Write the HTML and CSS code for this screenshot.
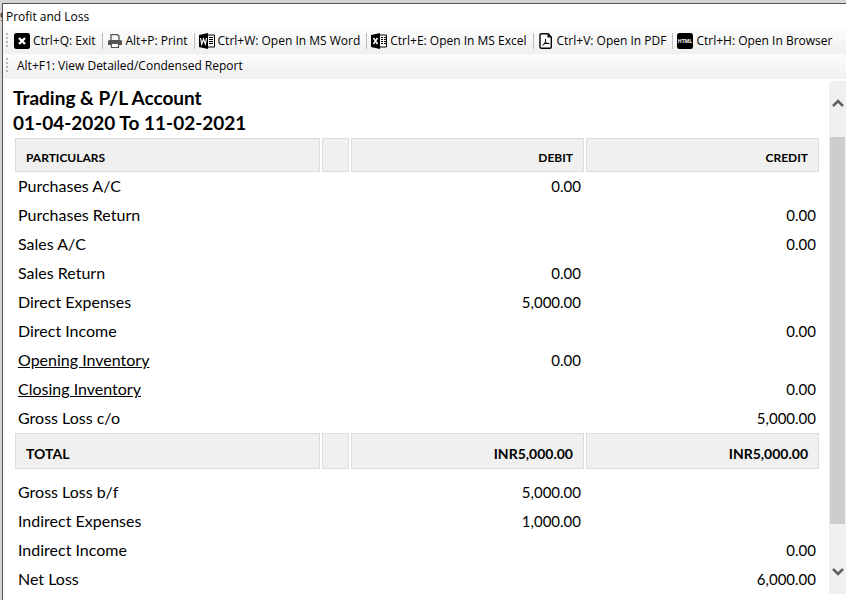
FILE: index.html
```html
<!DOCTYPE html>
<html lang="en">
<head>
  <meta charset="UTF-8" />
  <meta name="viewport" content="width=device-width, initial-scale=1" />
  <title>Profit and Loss</title>
  <link rel="stylesheet" href="styles.css">
</head>
<body>

  <div class="behind" aria-hidden="true">9</div>

  <div class="window">
    <div class="title-bar">Profit and Loss</div>

    <!-- Export / print buttons -->
    <div class="toolbar" role="toolbar">
      <span class="grip"></span>
      <button class="tool">
        <svg class="icon" viewBox="0 0 16 16"><rect width="16" height="16" rx="2.5"/><path d="M5 5l6 6M11 5l-6 6" stroke="#fff" stroke-width="2.4"/></svg>
        <span>Ctrl+Q: Exit</span>
      </button>
      <span class="separator"></span>
      <button class="tool">
        <svg class="icon" viewBox="0 0 16 16"><path d="M4 7V1.700h6.500L12 3.200V7" fill="none" stroke="#555" stroke-width="1.300"/><path d="M1 12V8.500Q1 7 2.500 7h11Q15 7 15 8.500V12h-3v-2H4v2z" fill="#555"/><path d="M4.500 10.500h7v4h-7z" fill="#fff" stroke="#555" stroke-width="1.200"/></svg>
        <span>Alt+P: Print</span>
      </button>
      <span class="separator"></span>
      <button class="tool">
        <svg class="icon" viewBox="0 0 16 16"><path d="M0 2l9-2v16L0 14z"/><path d="M9 2h6.500v12H9" fill="none" stroke="#000"/><path d="M10 4.500h4M10 6.500h4M10 8.500h4M10 10.500h4" stroke="#000"/><path d="M1.500 5l1.200 6L4.500 6l1.800 5 1.200-6" fill="none" stroke="#fff" stroke-width="1.200"/></svg>
        <span>Ctrl+W: Open In MS Word</span>
      </button>
      <span class="separator"></span>
      <button class="tool">
        <svg class="icon" viewBox="0 0 16 16"><path d="M0 2l9-2v16L0 14z"/><path d="M9 2h6.500v12H9" fill="none" stroke="#000"/><path d="M10 4.500h2M13 4.500h2M10 6.500h2M13 6.500h2M10 8.500h2M13 8.500h2M10 10.500h2M13 10.500h2" stroke="#000"/><path d="M2.500 5l4 6M6.500 5l-4 6" stroke="#fff" stroke-width="1.500"/></svg>
        <span>Ctrl+E: Open In MS Excel</span>
      </button>
      <span class="separator"></span>
      <button class="tool">
        <svg class="icon" viewBox="0 0 16 16"><path d="M3.500.7H10L13.300 4v9.800q0 1.500-1.500 1.500H3.500Q2 15.300 2 13.800V2.200Q2 .7 3.500.7z" fill="#fff" stroke="#000" stroke-width="1.400"/><path d="M9.500 1v3.500H13z"/><path d="M7.500 6v2.500Q6.800 11 4.500 12.500M7.500 8.500q1 2.500 4 2.200M5.500 11q2.500-1 5-.5" fill="none" stroke="#000"/></svg>
        <span>Ctrl+V: Open In PDF</span>
      </button>
      <span class="separator"></span>
      <button class="tool">
        <svg class="icon" viewBox="0 0 16 16"><rect width="16" height="16" rx="2.500"/><text x="8" y="10" class="icon-text">HTML</text></svg>
        <span>Ctrl+H: Open In Browser</span>
      </button>
    </div>

    <div class="toolbar" role="toolbar">
      <span class="grip"></span>
      <button class="tool tool-text">Alt+F1: View Detailed/Condensed Report</button>
    </div>

    <div class="content">
      <main class="report">
        <h1>Trading &amp; P/L Account<br>01-04-2020 To 11-02-2021</h1>

        <table>
          <colgroup>
            <col class="col-name">
            <col class="col-gap">
            <col class="col-amount">
            <col class="col-amount">
          </colgroup>
          <thead>
            <tr class="band"><th>PARTICULARS</th><th></th><th>DEBIT</th><th>CREDIT</th></tr>
          </thead>
          <tbody>
            <tr><td>Purchases A/C</td><td></td><td>0.00</td><td></td></tr>
            <tr><td>Purchases Return</td><td></td><td></td><td>0.00</td></tr>
            <tr><td>Sales A/C</td><td></td><td></td><td>0.00</td></tr>
            <tr><td>Sales Return</td><td></td><td>0.00</td><td></td></tr>
            <tr><td>Direct Expenses</td><td></td><td>5,000.00</td><td></td></tr>
            <tr><td>Direct Income</td><td></td><td></td><td>0.00</td></tr>
            <tr><td><a href="#">Opening Inventory</a></td><td></td><td>0.00</td><td></td></tr>
            <tr><td><a href="#">Closing Inventory</a></td><td></td><td></td><td>0.00</td></tr>
            <tr><td>Gross Loss c/o</td><td></td><td></td><td>5,000.00</td></tr>
            <tr class="band total"><th>TOTAL</th><th></th><th>INR5,000.00</th><th>INR5,000.00</th></tr>
            <tr class="after-total"><td>Gross Loss b/f</td><td></td><td>5,000.00</td><td></td></tr>
            <tr><td>Indirect Expenses</td><td></td><td>1,000.00</td><td></td></tr>
            <tr><td>Indirect Income</td><td></td><td></td><td>0.00</td></tr>
            <tr><td>Net Loss</td><td></td><td></td><td>6,000.00</td></tr>
          </tbody>
        </table>
      </main>

      <!-- Scroll bar -->
      <div class="scrollbar">
        <button class="scroll-button scroll-up" aria-label="Scroll up">
          <svg viewBox="0 0 12 8"><path d="M1 7l5-5 5 5" fill="none" stroke="#606060" stroke-width="2.500"/></svg>
        </button>
        <div class="scroll-thumb"></div>
        <button class="scroll-button scroll-down" aria-label="Scroll down">
          <svg viewBox="0 0 12 8"><path d="M1 1l5 5 5-5" fill="none" stroke="#606060" stroke-width="2.500"/></svg>
        </button>
      </div>
    </div>
  </div>

</body>
</html>
```
FILE: styles.css
```css
* {
  box-sizing: border-box;
}

body {
  margin: 0;
  height: 100vh;
  overflow: hidden;
  padding: 3px 0 0 2px;
  background-color: #d4d4d4;
  font-family: "Open Sans", "Segoe UI", sans-serif;
  font-size: 12px;
  color: #000;
}

/* title of the window underneath, mostly covered */
.behind {
  position: absolute;
  top: 8px;
  left: 0;
}

.window {
  position: relative;
  display: flex;
  flex-direction: column;
  height: 100%;
  border-top: 1px solid #555;
  border-left: 1px solid #555;
  background-color: #fff;
}

.title-bar {
  padding: 0 3px;
  line-height: 25px;
}

.toolbar {
  display: flex;
  align-items: center;
  flex: none;
  height: 25px;
  padding-bottom: 2px;
  background: linear-gradient(#fcfcfc, #f0f0f0);
  white-space: nowrap;
}

.grip {
  flex: none;
  width: 2px;
  height: 16px;
  margin: 0 6px 0 3px;
  background: repeating-linear-gradient(#b8b8b8 0 2px, transparent 2px 4px);
}

.tool {
  display: flex;
  align-items: center;
  flex: none;
  gap: 3px;
  padding: 0;
  border: none;
  background: none;
  font: inherit;
  color: inherit;
}

.tool-text {
  padding: 0 3px;
}

.separator {
  flex: none;
  width: 1px;
  height: 16px;
  margin: 0 4px 0 6px;
  background-color: #bdbdbd;
}

.icon {
  width: 16px;
  height: 16px;
}

.icon-text {
  fill: #fff;
  font-size: 5px;
  font-weight: bold;
  text-anchor: middle;
}

.content {
  display: flex;
  flex: 1;
  min-height: 0;
}

.report {
  flex: 1;
  overflow: hidden;
  padding: 6px 8px 0 10px;
  font-family: Lato, Calibri, sans-serif;
  font-size: 16px;
}

h1 {
  margin: 0 0 3px;
  font-size: 19px;
  line-height: 25px;
}

table {
  width: 100%;
  table-layout: fixed;
  border-collapse: separate;
  border-spacing: 2px 0;
}

.col-gap {
  width: 27px;
}

.col-amount {
  width: 29.2%;
}

td {
  height: 29px;
  padding: 0 3px 2px;
}

.band th {
  height: 34px;
  padding: 4px 10px 0;
  border: 1px solid #dcdcdc;
  background-color: #f0f0f0;
  font-size: 12px;
  text-align: left;
}

.total th {
  height: 36px;
  font-size: 14px;
}

.after-total td {
  height: 38px;
  padding-top: 9px;
}

td:nth-child(n+3) {
  font-size: 15px;
  text-align: right;
}

.band th:nth-child(n+3) {
  text-align: right;
}

a {
  color: inherit;
}

.scrollbar {
  display: flex;
  flex-direction: column;
  width: 17px;
  margin: 2px 0 6px;
  padding: 0 1px;
  background-color: #f0f0f0;
}

.scroll-button {
  display: flex;
  justify-content: center;
  padding: 18px 0;
  border: none;
  background: none;
}

.scroll-up {
  align-items: flex-start;
  height: 56px;
}

.scroll-down {
  align-items: flex-end;
  height: 70px;
}

.scroll-button svg {
  width: 12px;
  height: 8px;
}

.scroll-thumb {
  flex: 1;
  background-color: #cdcdcd;
}
```
